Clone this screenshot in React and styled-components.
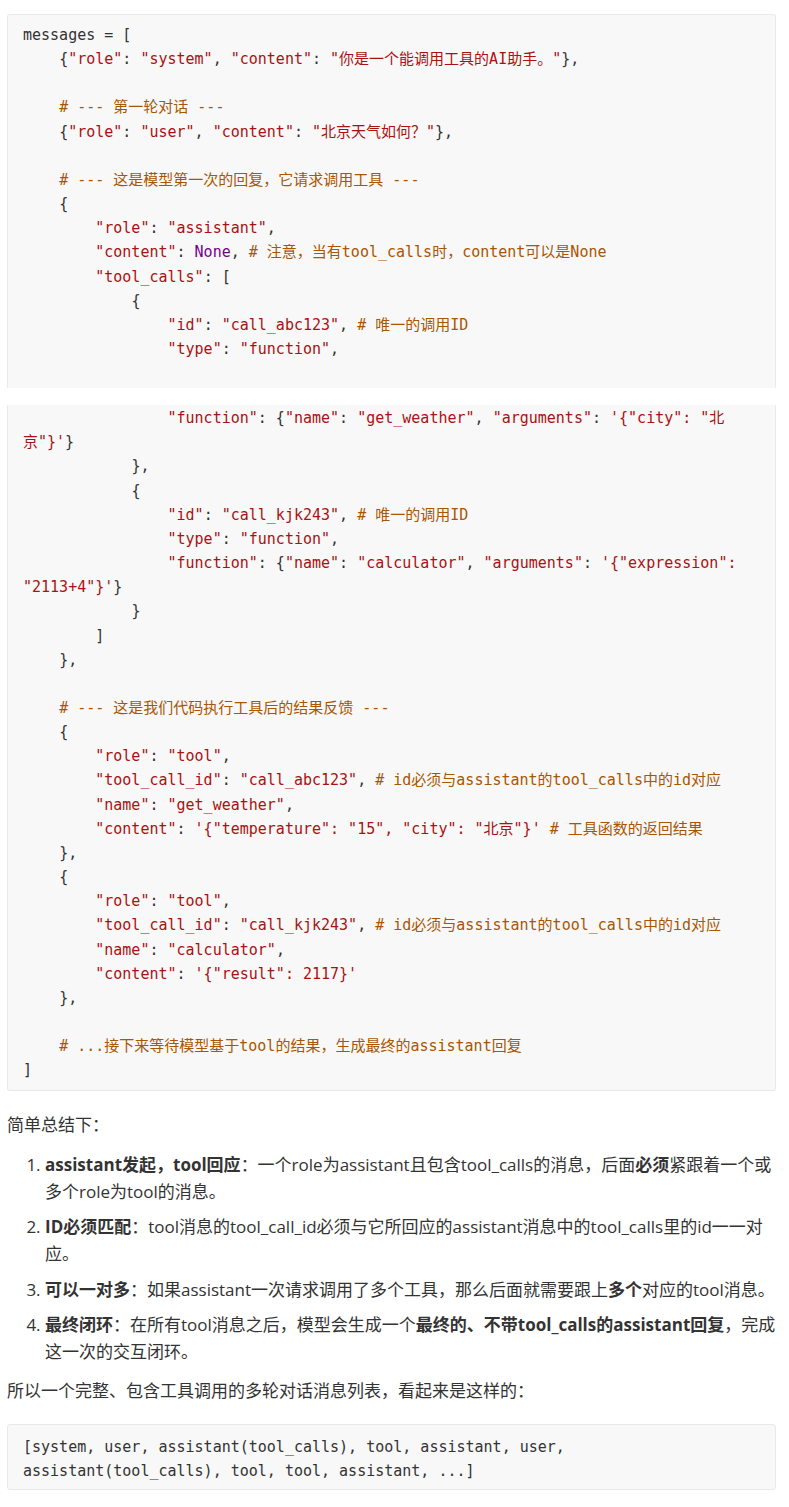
import React from "react";
import styled, { createGlobalStyle } from "styled-components";

const Global = createGlobalStyle`
  html, body { margin: 0; padding: 0; background: #fff; }
  body { -webkit-font-smoothing: antialiased; }
`;

const Page = styled.main`
  padding: 14px 13px 20px 7px;
  color: #333;
  font-family: "Open Sans", "Noto Sans CJK SC", sans-serif;
  font-size: 17px;
`;

const padding = {
  top: "8px 15px 26px 15px",
  bottom: "0 15px 7px 15px",
  whole: "10px 15px 6px 15px",
};

const lineHeights = { top: "24.15px", bottom: "24.15px", whole: "24px" };

const CodeBlock = styled.pre`
  margin: ${(p) => p.$margin || "0"};
  background: #f8f8f8;
  border: 1px solid #e7eaed;
  border-top-color: ${(p) => (p.$part === "bottom" ? "#f8f8f8" : "#e7eaed")};
  border-bottom-color: ${(p) => (p.$part === "top" ? "#f8f8f8" : "#e7eaed")};
  border-radius: ${(p) =>
    p.$part === "top" ? "3px 3px 0 0" : p.$part === "bottom" ? "0 0 3px 3px" : "3px"};
  padding: ${(p) => padding[p.$part]};
  font-family: "DejaVu Sans Mono", "Noto Sans CJK SC", monospace;
  font-size: 15px;
  line-height: ${(p) => lineHeights[p.$part]};
  color: #333;
  white-space: pre-wrap;
  overflow-wrap: break-word;
`;

const CodeLine = styled.div`
  min-height: ${(p) => p.$lh};
`;

const tokColors = { s: "#aa1111", c: "#aa5500", k: "#770088", p: "#333333" };

const Tok = styled.span`
  color: ${(p) => tokColors[p.$kind]};
`;

const Para = styled.p`
  margin: ${(p) => p.$margin};
  line-height: 27.2px;
`;

const List = styled.ol`
  margin: 13px 0 0;
  padding-left: 38px;
  line-height: 27.2px;
`;

const Item = styled.li`
  & + & { margin-top: 8px; }
`;

function tokenize(line) {
  const out = [];
  let buf = "";
  let i = 0;
  const flush = () => {
    if (buf) {
      out.push({ k: "p", s: buf });
      buf = "";
    }
  };
  while (i < line.length) {
    const c = line[i];
    if (c === "#") {
      flush();
      out.push({ k: "c", s: line.slice(i) });
      break;
    }
    if (c === '"' || c === "'") {
      flush();
      let j = i + 1;
      while (j < line.length && line[j] !== c) j++;
      out.push({ k: "s", s: line.slice(i, j + 1) });
      i = j + 1;
      continue;
    }
    if (line.startsWith("None", i) && !/\w/.test(line[i - 1] || "")) {
      flush();
      out.push({ k: "k", s: "None" });
      i += 4;
      continue;
    }
    buf += c;
    i++;
  }
  flush();
  return out;
}

function Code({ lines, part, margin, plain }) {
  return (
    <CodeBlock $part={part} $margin={margin}>
      {lines.map((line, idx) => (
        <CodeLine key={idx} $lh={lineHeights[part]}>
          {plain
            ? line
            : tokenize(line).map((t, j) => (
                <Tok key={j} $kind={t.k}>
                  {t.s}
                </Tok>
              ))}
        </CodeLine>
      ))}
    </CodeBlock>
  );
}

const part1 = [
  "messages = [",
  '    {"role": "system", "content": "你是一个能调用工具的AI助手。"},',
  "",
  "    # --- 第一轮对话 ---",
  '    {"role": "user", "content": "北京天气如何？"},',
  "",
  "    # --- 这是模型第一次的回复，它请求调用工具 ---",
  "    {",
  '        "role": "assistant",',
  '        "content": None, # 注意，当有tool_calls时，content可以是None',
  '        "tool_calls": [',
  "            {",
  '                "id": "call_abc123", # 唯一的调用ID',
  '                "type": "function",',
];

const part2 = [
  '                "function": {"name": "get_weather", "arguments": \'{"city": "北京"}\'}',
  "            },",
  "            {",
  '                "id": "call_kjk243", # 唯一的调用ID',
  '                "type": "function",',
  '                "function": {"name": "calculator", "arguments": \'{"expression": "2113+4"}\'}',
  "            }",
  "        ]",
  "    },",
  "",
  "    # --- 这是我们代码执行工具后的结果反馈 ---",
  "    {",
  '        "role": "tool",',
  '        "tool_call_id": "call_abc123", # id必须与assistant的tool_calls中的id对应',
  '        "name": "get_weather",',
  '        "content": \'{"temperature": "15", "city": "北京"}\' # 工具函数的返回结果',
  "    },",
  "    {",
  '        "role": "tool",',
  '        "tool_call_id": "call_kjk243", # id必须与assistant的tool_calls中的id对应',
  '        "name": "calculator",',
  '        "content": \'{"result": 2117}\'',
  "    },",
  "",
  "    # ...接下来等待模型基于tool的结果，生成最终的assistant回复",
  "]",
];

const finalList = [
  "[system, user, assistant(tool_calls), tool, assistant, user, assistant(tool_calls), tool, tool, assistant, ...]",
];

export default function App() {
  return (
    <>
      <Global />
      <Page>
        <Code lines={part1} part="top" />
        <Code lines={part2} part="bottom" margin="17px 0 0" />
        <Para $margin="20px 0 0">简单总结下：</Para>
        <List>
          <Item>
            <strong>assistant发起，tool回应</strong>：一个role为assistant且包含tool_calls的消息，后面<strong>必须</strong>紧跟着一个或多个role为tool的消息。
          </Item>
          <Item>
            <strong>ID必须匹配</strong>：tool消息的tool_call_id必须与它所回应的assistant消息中的tool_calls里的id一一对应。
          </Item>
          <Item>
            <strong>可以一对多</strong>：如果assistant一次请求调用了多个工具，那么后面就需要跟上<strong>多个</strong>对应的tool消息。
          </Item>
          <Item>
            <strong>最终闭环</strong>：在所有tool消息之后，模型会生成一个<strong>最终的、不带tool_calls的assistant回复</strong>，完成这一次的交互闭环。
          </Item>
        </List>
        <Para $margin="12px 0 0">所以一个完整、包含工具调用的多轮对话消息列表，看起来是这样的：</Para>
        <Code lines={finalList} part="whole" margin="20px 0 0" plain />
      </Page>
    </>
  );
}
